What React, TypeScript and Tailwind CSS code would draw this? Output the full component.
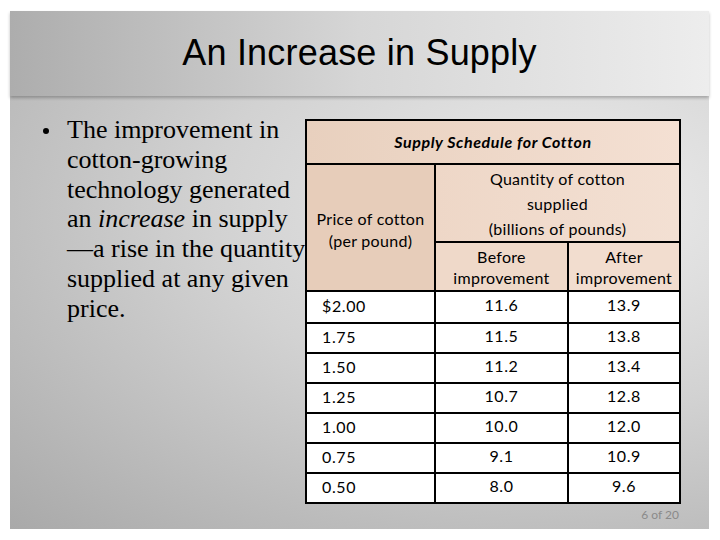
const rows = [
  ["$2.00", "11.6", "13.9"],
  ["1.75", "11.5", "13.8"],
  ["1.50", "11.2", "13.4"],
  ["1.25", "10.7", "12.8"],
  ["1.00", "10.0", "12.0"],
  ["0.75", "9.1", "10.9"],
  ["0.50", "8.0", "9.6"],
];

const bulletLines = [
  <>The improvement in</>,
  <>cotton-growing</>,
  <>technology generated</>,
  <>
    an <em>increase</em> in supply
  </>,
  <>—a rise in the quantity</>,
  <>supplied at any given</>,
  <>price.</>,
];

export default function App() {
  return (
    <div className="w-[720px] h-[540px] bg-white pt-[11px] pl-[10px]">
      <div className="w-[699px] h-[518px] flex flex-col bg-[#b8b8b8]">
        {/* Title band */}
        <div className="h-[85px] flex items-center justify-center bg-gradient-to-r from-[#adadad] via-[#d6d6d6] to-[#ededed] shadow-[0_2px_3px_rgba(0,0,0,0.25)] relative z-10">
          <h1 className="text-[36px] text-black font-['Liberation_Sans',Arial,sans-serif] -mt-[2px] tracking-[0.2px]">
            An Increase in Supply
          </h1>
        </div>

        {/* Body */}
        <div className="flex-1 flex bg-[radial-gradient(ellipse_at_80%_25%,#ececec_0%,#d2d2d2_45%,#a9a9a9_100%)]">
          {/* Bullet text */}
          <div className="w-[295px] pt-[19px] pl-[33px] flex font-['Liberation_Serif','Times_New_Roman',serif] text-[26px] leading-[29.8px] text-black">
            <div className="w-[24px] shrink-0 pt-[13px]">
              <div className="w-[6px] h-[6px] rounded-full bg-black" />
            </div>
            <div className="whitespace-nowrap">
              {bulletLines.map((l, i) => (
                <div key={i}>{l}</div>
              ))}
            </div>
          </div>

          {/* Table */}
          <div className="pt-[23px]">
            <table className="border-collapse border-2 border-black font-['Lato','Open_Sans',sans-serif] text-[16px] text-black">
              <colgroup>
                <col className="w-[129px]" />
                <col className="w-[133px]" />
                <col className="w-[112px]" />
              </colgroup>
              <tbody>
                <tr className="h-[44px]">
                  <td
                    colSpan={3}
                    className="border-2 border-black bg-gradient-to-r from-[#e8d0be] to-[#f4e0d3] text-center font-bold italic tracking-[0.6px] p-0"
                  >
                    Supply Schedule for Cotton
                  </td>
                </tr>
                <tr className="h-[78px]">
                  <td
                    rowSpan={2}
                    className="border-2 border-black bg-[#e7cdba] text-center leading-[22px] pt-[4px] px-0 tracking-[0.3px]"
                  >
                    Price of cotton
                    <br />
                    (per pound)
                  </td>
                  <td
                    colSpan={2}
                    className="border-2 border-black bg-gradient-to-r from-[#eed7c7] to-[#f3e0d3] text-center leading-[25px] p-0 tracking-[0.3px]"
                  >
                    Quantity of cotton
                    <br />
                    supplied
                    <br />
                    (billions of pounds)
                  </td>
                </tr>
                <tr className="h-[49px]">
                  <td className="border-2 border-black bg-[#efd9c9] text-center leading-[21px] p-0 tracking-[0.3px]">
                    Before
                    <br />
                    improvement
                  </td>
                  <td className="border-2 border-black bg-[#f2ddcf] text-center leading-[21px] p-0 tracking-[0.3px]">
                    After
                    <br />
                    improvement
                  </td>
                </tr>
                {rows.map((r, i) => (
                  <tr key={i} className={i === 0 ? "h-[32px]" : "h-[30px]"}>
                    <td className="border-2 border-black bg-white pl-[15px] pb-[2px] py-0 leading-[20px] tracking-[0.6px]">{r[0]}</td>
                    <td className="border-2 border-black bg-white text-center pb-[4px] pt-0 leading-[20px] tracking-[0.6px]">{r[1]}</td>
                    <td className="border-2 border-black bg-white text-center pb-[4px] pt-0 leading-[20px] tracking-[0.6px]">{r[2]}</td>
                  </tr>
                ))}
              </tbody>
            </table>
            <div className="text-right text-[12px] leading-[12px] text-[#8a8a8a] font-['Lato',sans-serif] mt-[5px] pr-[2px]">
              6 of 20
            </div>
          </div>
        </div>
      </div>
    </div>
  );
}
